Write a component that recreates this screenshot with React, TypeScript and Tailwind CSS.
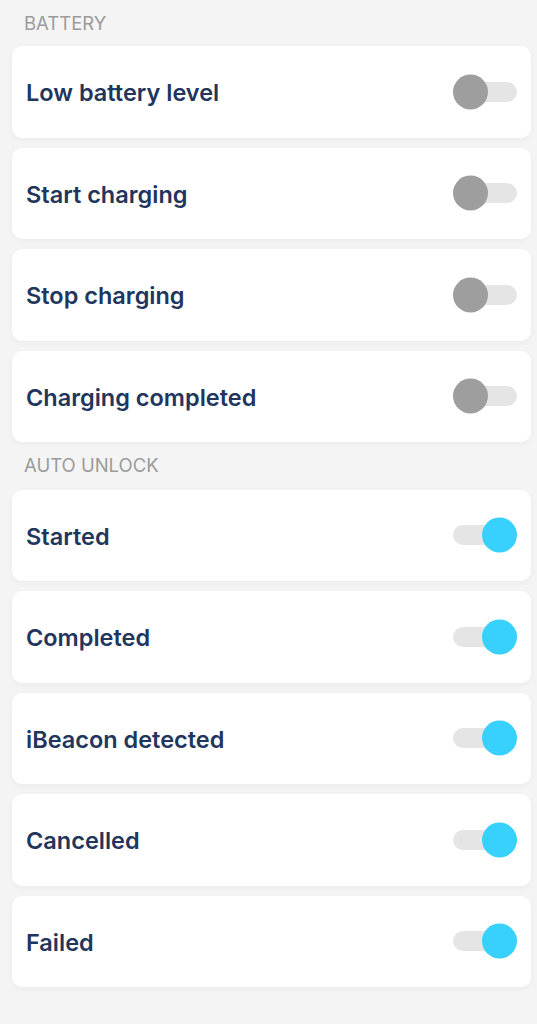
const sections = [
  {
    title: "BATTERY",
    items: [
      { label: "Low battery level", on: false },
      { label: "Start charging", on: false },
      { label: "Stop charging", on: false },
      { label: "Charging completed", on: false },
    ],
  },
  {
    title: "AUTO UNLOCK",
    items: [
      { label: "Started", on: true },
      { label: "Completed", on: true },
      { label: "iBeacon detected", on: true },
      { label: "Cancelled", on: true },
      { label: "Failed", on: true },
    ],
  },
];

function Toggle({ on }: { on: boolean }) {
  return (
    <div className="relative w-[64px] h-[20px] rounded-full bg-[#e5e5e5]">
      <div
        className={
          on
            ? "absolute top-1/2 -translate-y-1/2 right-0 w-[35px] h-[35px] rounded-full bg-[#38d1fe]"
            : "absolute top-1/2 -translate-y-1/2 left-0 w-[35px] h-[35px] rounded-full bg-[#9e9e9e]"
        }
      />
    </div>
  );
}

export default function App() {
  return (
    <div
      className="min-h-[1024px] bg-[#f4f4f4] pl-[12px] pr-[6px] pb-10"
      style={{ fontFamily: "Inter, 'Noto Sans', sans-serif" }}
    >
      {sections.map((section, si) => (
        <div key={section.title}>
          <div
            className={
              si === 0
                ? "h-[46px] flex items-center pl-[12px] pt-[2px] text-[18.5px] text-[#9b9b9b]"
                : "h-[47.5px] flex items-center pl-[12px] pt-[1px] text-[18.5px] text-[#9b9b9b]"
            }
          >
            {section.title}
          </div>
          <div className="flex flex-col gap-[10px]">
            {section.items.map((item) => (
              <div
                key={item.label}
                className="h-[91.5px] rounded-[10px] bg-white flex items-center justify-between pl-[14px] pr-[14px] shadow-[0_2px_6px_rgba(0,0,0,0.04)]"
              >
                <span className="text-[23.5px] font-semibold text-[#22355c] pt-[2px]">
                  {item.label}
                </span>
                <Toggle on={item.on} />
              </div>
            ))}
          </div>
        </div>
      ))}
    </div>
  );
}
